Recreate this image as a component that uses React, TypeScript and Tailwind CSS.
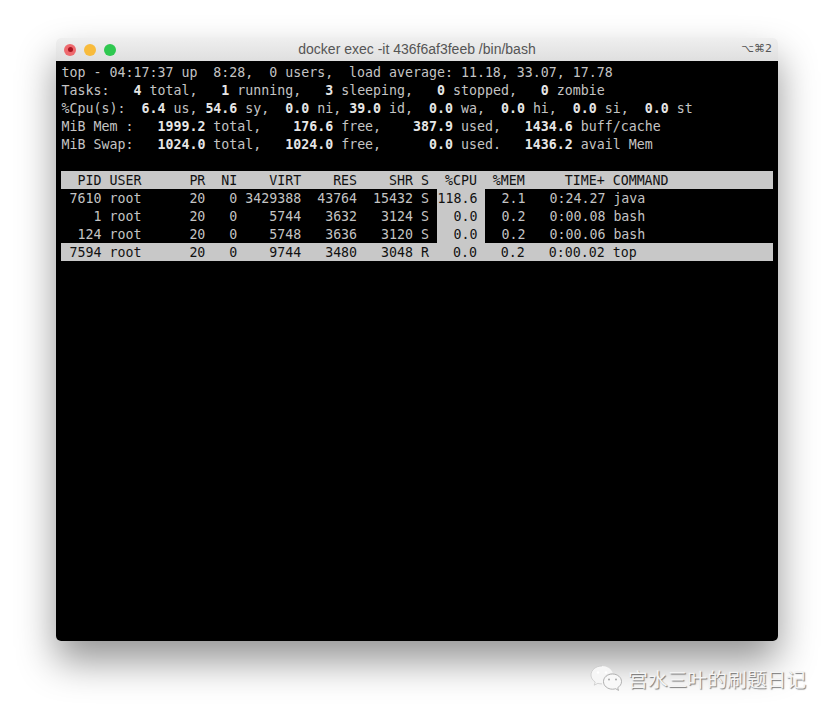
import React from 'react'

const SUMMARY = [
  'top - 04:17:37 up  8:28,  0 users,  load average: 11.18, 33.07, 17.78',
  'Tasks:*   4 *total,*   1 *running,*   3 *sleeping,*   0 *stopped,*   0 *zombie',
  '%Cpu(s):*  6.4 *us,* 54.6 *sy,*  0.0 *ni,* 39.0 *id,*  0.0 *wa,*  0.0 *hi,*  0.0 *si,*  0.0 *st',
  'MiB Mem :*   1999.2 *total,*    176.6 *free,*    387.9 *used,*   1434.6 *buff/cache',
  'MiB Swap:*   1024.0 *total,*   1024.0 *free,*      0.0 *used.*   1436.2 *avail Mem',
]

const HEADER = '  PID USER      PR  NI    VIRT    RES    SHR S  %CPU  %MEM     TIME+ COMMAND'

const PROCESSES = [
  { left: ' 7610 root      20   0 3429388  43764  15432 S ', cpu: '118.6 ', right: '  2.1   0:24.27 java' },
  { left: '    1 root      20   0    5744   3632   3124 S ', cpu: '  0.0 ', right: '  0.2   0:00.08 bash' },
  { left: '  124 root      20   0    5748   3636   3120 S ', cpu: '  0.0 ', right: '  0.2   0:00.06 bash' },
]

const SummaryLine: React.FC<{ text: string }> = ({ text }) => (
  <div className="h-[18px]">
    {text.split('*').map((part, i) => (
      <span key={i} className={i % 2 ? 'font-bold text-[#e6e6e6]' : ''}>{part}</span>
    ))}
  </div>
)

const WeChatIcon = () => (
  <svg width="34" height="30" viewBox="0 0 34 30" fill="none">
    <path d="M13 2C6.900 2 2 6 2 11c0 2.900 1.600 5.300 4.200 7l-1 3.200 3.700-1.900c1.300.4 2.700.6 4.100.6" fill="#f6f6f6" stroke="#c4c4c4" strokeWidth="0.7" />
    <path d="M13 2c5.200 0 9.600 3 10.700 7.100C18.300 9 14 12.700 14 17c0 1 .2 2 .6 2.900h-1.600V2z" fill="#f6f6f6" />
    <path d="M23.500 10c-5 0-9 3.400-9 7.600s4 7.600 9 7.600c1.100 0 2.100-.2 3.100-.5l2.900 1.700-.8-2.700c2.300-1.400 3.800-3.600 3.800-6.100 0-4.200-4-7.600-9-7.600z" fill="#f8f8f8" stroke="#a0a0a0" strokeWidth="0.8" />
    <circle cx="9" cy="8.500" r="1.200" fill="#ffffff" />
    <circle cx="17" cy="8.500" r="1.200" fill="#ffffff" />
    <circle cx="20" cy="15.500" r="1" fill="#a8a8a8" />
    <circle cx="27" cy="15.500" r="1" fill="#a8a8a8" />
  </svg>
)

export default function App() {
  return (
    <div className="relative h-[715px] w-[834px] overflow-hidden bg-white pl-[56px] pt-[38px]">
      <div className="flex h-[603px] w-[722px] flex-col overflow-hidden rounded-[5px] shadow-[0_20px_38px_rgba(0,0,0,0.42)]">
        <div className="grid h-[23px] shrink-0 grid-cols-[1fr_auto_1fr] items-center bg-gradient-to-b from-[#efefef] to-[#dfdfdf] pl-[8px] pr-[6px] font-['Liberation_Sans',sans-serif] text-[14px] text-[#555555]">
          <div className="flex gap-[8px]">
            <span className="flex h-[12px] w-[12px] items-center justify-center rounded-full bg-[#ee6a6e]">
              <span className="h-[5px] w-[5px] rounded-full bg-[#a81320]" />
            </span>
            <span className="h-[12px] w-[12px] rounded-full bg-[#f8bb3c]" />
            <span className="h-[12px] w-[12px] rounded-full bg-[#2fc850]" />
          </div>
          <span className="mr-[2px]">docker exec -it 436f6af3feeb /bin/bash</span>
          <span className="justify-self-end font-['DejaVu_Sans',sans-serif] text-[11px]">⌥⌘2</span>
        </div>

        <div className="flex-1 whitespace-pre bg-black pl-[5px] pt-[2px] indent-[0.6px] font-['DejaVu_Sans_Mono',monospace] text-[13.28px] leading-[20px] text-[#c4c4c4]">
          {SUMMARY.map(line => <SummaryLine key={line} text={line} />)}
          <div className="h-[18px]" />
          <div className="h-[18px] w-[712px] bg-[#c8c8c8] text-[#111111]">{HEADER}</div>
          {PROCESSES.map(p => (
            <div key={p.left} className="flex h-[18px]">
              <span className="w-[376px]">{p.left}</span>
              <span className="w-[48px] bg-[#c8c8c8] text-[#111111]">{p.cpu}</span>
              <span>{p.right}</span>
            </div>
          ))}
          <div className="h-[18px] w-[712px] bg-[#c8c8c8] text-[#111111]">
            {' 7594 root      20   0    9744   3480   3048 R   0.0   0.2   0:00.02 top'}
          </div>
        </div>
      </div>

      {/* watermark sits over the window shadow */}
      <div className="absolute left-[589px] top-[664px] flex items-center gap-[5px]">
        <WeChatIcon />
        <span className="font-['Noto_Sans_CJK_SC',sans-serif] text-[19.8px] leading-[28px] text-[#f4f4f4] [text-shadow:1px_1px_1px_rgba(0,0,0,0.5)]">
          宫水三叶的刷题日记
        </span>
      </div>
    </div>
  )
}
